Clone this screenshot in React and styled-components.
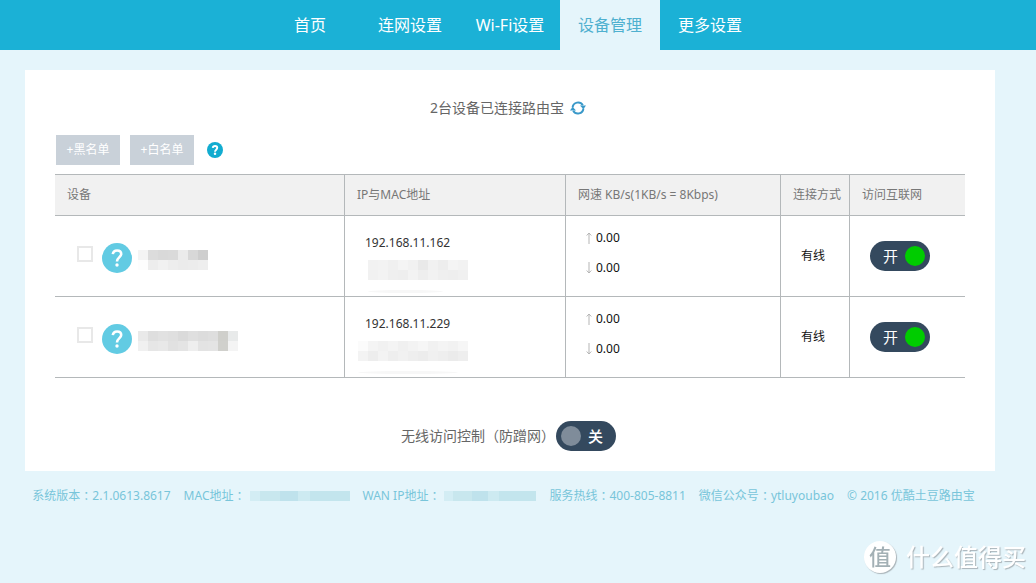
import React, { useState } from 'react';
import styled, { createGlobalStyle } from 'styled-components';

const GlobalStyle = createGlobalStyle`
  * {
    box-sizing: border-box;
  }

  body {
    margin: 0;
    background: #e5f5fb;
    color: #111;
    font-family: 'Noto Sans', 'Noto Sans CJK SC', sans-serif;
    font-size: 12px;
    line-height: 20px;
  }
`;

const Header = styled.header`
  background: #1bb1d6;
  padding-right: 16px;
`;

const Nav = styled.nav`
  display: flex;
  justify-content: center;
`;

const NavLink = styled.a`
  width: 100px;
  height: 50px;
  line-height: 50px;
  font-size: 16px;
  text-align: center;
  text-decoration: none;
  white-space: nowrap;
  color: ${(props) => (props.$active ? '#4fb0cf' : '#fff')};
  background: ${(props) => (props.$active ? '#e5f5fb' : 'transparent')};
`;

const Page = styled.div`
  padding: 20px 16px 0 0;
`;

const Card = styled.main`
  margin: 0 25px;
  padding: 28px 30px 20px;
  background: #fff;
`;

const Summary = styled.div`
  display: flex;
  justify-content: center;
  align-items: center;
  gap: 6px;
  padding-right: 4px;
  font-size: 14px;
  color: #666;
`;

const IconButton = styled.button`
  display: flex;
  padding: 0;
  border: none;
  background: none;
  cursor: pointer;
`;

const Toolbar = styled.div`
  display: flex;
  align-items: center;
  gap: 10px;
  margin: 17px 0 9px 1px;
`;

const ListButton = styled.button`
  width: 64px;
  height: 30px;
  padding: 0;
  border: none;
  background: #c9d1d9;
  color: #fff;
  font: inherit;
  cursor: pointer;
`;

const HelpButton = styled(IconButton)`
  margin-left: 3px;
`;

const Table = styled.table`
  width: 100%;
  table-layout: fixed;
  border-collapse: separate;
  border-spacing: 0;
`;

const Th = styled.th`
  width: ${(props) => props.$width || 'auto'};
  height: 42px;
  padding: 0 0 0 12px;
  border-top: 1px solid #b4b8ba;
  border-bottom: 1px solid #b4b8ba;
  background: #f1f1f1;
  color: #777;
  font-weight: normal;
  text-align: left;
  white-space: nowrap;

  & + & {
    border-left: 1px solid #b4b8ba;
  }
`;

const Td = styled.td`
  height: 81px;
  padding: ${(props) => props.$top || '0'} 0 0 20px;
  border-bottom: 1px solid #b4b8ba;
  vertical-align: ${(props) => (props.$top ? 'top' : 'middle')};

  & + & {
    border-left: 1px solid #b4b8ba;
  }
`;

const Device = styled.div`
  display: flex;
  align-items: flex-start;
  padding-left: 2px;
`;

const CheckBox = styled.input`
  appearance: none;
  width: 16px;
  height: 16px;
  margin: 3px 9px 0 0;
  border: 2px solid #e8e8e8;
  background: #fff;

  &:checked {
    background: #1bb1d6;
  }
`;

const DeviceName = styled.div`
  padding: 7px 0 0 6px;
`;

const IpAddress = styled.div`
  color: #333;
`;

const MacAddress = styled.div`
  margin-top: 7px;
  margin-left: ${(props) => props.$shift}px;
`;

const Smudge = styled.div`
  width: ${(props) => props.$width}px;
  height: 3px;
  margin-top: 10px;
  border-radius: 50%;
  background: #f7f7f7;
`;

const MosaicGrid = styled.div`
  display: grid;
  grid-template-columns: repeat(${(props) => props.$cols}, 10px);
  grid-auto-rows: 10px;
`;

const MosaicCell = styled.span`
  background: ${(props) => props.$color};
`;

const Speed = styled.div`
  display: flex;
  align-items: center;
  gap: 4px;
  height: 30px;
`;

const SwitchLabel = styled.label`
  position: relative;
  display: flex;
  flex-direction: ${(props) => (props.$on ? 'row' : 'row-reverse')};
  justify-content: space-between;
  align-items: center;
  width: 60px;
  height: 30px;
  padding: ${(props) => (props.$on ? '0 5px 0 13px' : '0 13px 0 5px')};
  border-radius: 15px;
  background: #34495e;
  color: #fff;
  font-size: 15px;
  font-weight: ${(props) => (props.$on ? 400 : 500)};
  cursor: pointer;
`;

const SwitchInput = styled.input`
  position: absolute;
  inset: 0;
  margin: 0;
  opacity: 0;
`;

const Knob = styled.span`
  width: 20px;
  height: 20px;
  border-radius: 50%;
  background: ${(props) => (props.$on ? '#00cc00' : '#7f8c9a')};
`;

const AccessControl = styled.div`
  display: flex;
  justify-content: center;
  align-items: center;
  gap: 1px;
  margin-top: 43px;
  padding-right: 3px;
  font-size: 14px;
  color: #666;
`;

const Footer = styled.footer`
  display: flex;
  justify-content: center;
  margin-top: 15px;
  color: #78c5da;
  white-space: nowrap;
`;

const FooterItem = styled.span`
  display: flex;
  align-items: center;
  margin-right: ${(props) => props.$gap || 13}px;
`;

// the TC face centres the full-width colon in its cell
const Colon = styled.span`
  font-family: 'Noto Sans CJK TC', sans-serif;
`;

const FooterMosaic = styled.div`
  width: ${(props) => props.$width}px;
  height: 10px;
  margin-left: 4px;
  background: linear-gradient(
    90deg,
    #d3edf4 0 10%,
    #c8e7ee 10% 30%,
    #bfe2ec 30% 48%,
    #cdeaf1 48% 60%,
    #c3e5ed 60%
  );
`;

const Watermark = styled.div`
  position: fixed;
  right: 10px;
  bottom: 10px;
  display: flex;
  align-items: center;
  gap: 10px;
  color: #fff;
  font-size: 24px;
  font-weight: 500;
  line-height: 32px;
  text-shadow: 1px 1px 1px #a9b3b8;
`;

const WatermarkBadge = styled.span`
  width: 32px;
  height: 32px;
  border-radius: 50%;
  background: #fff;
  box-shadow: 1px 1px 1px #a9b3b8;
  color: #a3b0b5;
  font-size: 22px;
  line-height: 30px;
  text-align: center;
  text-shadow: none;
`;

const menu = ['首页', '连网设置', 'Wi-Fi设置', '设备管理', '更多设置'];

const devices = [
  {
    id: 1,
    ip: '192.168.11.162',
    name: [
      ['#f4f4f4', '#dcdcdc', '#d9d9d9', '#dadada', '#ebebeb', '#d8d8d8', '#cecece'],
      ['#fdfdfd', '#ededed', '#f1f1f1', '#ededed', '#ebebeb', '#ececec', '#eeeeee'],
    ],
    mac: [
      ['#f2f2f2', '#f3f3f3', '#f0f0f0', '#f4f4f4', '#f1f1f1', '#e9e9e9', '#f1f1f1', '#ededed', '#f4f4f4', '#f2f2f2'],
      ['#f1f1f1', '#f3f3f3', '#efefef', '#eeeeee', '#f3f3f3', '#eeeeee', '#f2f2f2', '#efefef', '#eeeeee', '#f0f0f0'],
    ],
    shift: 3,
    smudge: 75,
  },
  {
    id: 2,
    ip: '192.168.11.229',
    name: [
      ['#e9e9e9', '#dedede', '#e1e1e1', '#dfdfdf', '#dadada', '#dfdfdf', '#dcdcdc', '#dedede', '#cfcfcb', '#e8eaea'],
      ['#f0f0f0', '#e6e6e6', '#e8e8e8', '#e1e1e1', '#e4e4e4', '#eeeeee', '#e3e3e3', '#e4e4e4', '#d0d0cc', '#f4f4f4'],
    ],
    mac: [
      ['#fbfbfb', '#f4f4f4', '#f1f1f1', '#f4f4f4', '#f0f0f0', '#f3f3f3', '#f6f6f6', '#f1f1f1', '#f4f4f4', '#f2f2f2', '#f6f6f6'],
      ['#f3f3f3', '#ededed', '#f3f3f3', '#eeeeee', '#f1f1f1', '#eeeeee', '#ececec', '#f0f0f0', '#eeeeee', '#ebebeb', '#eeeeee'],
    ],
    shift: -7,
    smudge: 100,
  },
];

function Mosaic({ rows }) {
  return (
    <MosaicGrid $cols={rows[0].length}>
      {rows.flat().map((color, i) => (
        <MosaicCell key={i} $color={color} />
      ))}
    </MosaicGrid>
  );
}

function QuestionIcon({ size, color, stroke }) {
  return (
    <svg width={size} height={size} viewBox="0 0 30 30" fill="none">
      <circle cx="15" cy="15" r="15" fill={color} />
      <path
        d="M10.8 11.2c.3-2.4 2-3.7 4.3-3.7 2.4 0 4.1 1.4 4.1 3.5 0 3.3-4.2 3.6-4.2 7.4"
        stroke="#fff"
        strokeWidth={stroke}
      />
      <circle cx="15" cy="22" r={stroke * 0.65} fill="#fff" />
    </svg>
  );
}

function RefreshIcon() {
  return (
    <svg width="16" height="14" viewBox="0 0 16 14" fill="none">
      <path d="M2.6 6.4A5.5 5.5 0 0 1 12.8 4.2" stroke="#3a99c9" strokeWidth="2" />
      <path d="M13.4 7.6A5.5 5.5 0 0 1 3.2 9.8" stroke="#3a99c9" strokeWidth="2" />
      <path d="M10 4.6H16L13.4 8.2z" fill="#3a99c9" />
      <path d="M6 9.4H0L2.6 5.8z" fill="#3a99c9" />
    </svg>
  );
}

function Arrow({ down }) {
  return (
    <svg width="6" height="12" viewBox="0 0 6 12" fill="none" stroke="#b5b5b5">
      <path d={down ? 'M3 0v11M.7 8.5 3 11l2.3-2.5' : 'M3 12V1M.7 3.5 3 1l2.3 2.5'} />
    </svg>
  );
}

function Switch({ label, defaultOn }) {
  const [on, setOn] = useState(defaultOn);

  return (
    <SwitchLabel $on={on}>
      <SwitchInput
        type="checkbox"
        role="switch"
        aria-label={label}
        checked={on}
        onChange={() => setOn(!on)}
      />
      <span>{on ? '开' : '关'}</span>
      <Knob $on={on} />
    </SwitchLabel>
  );
}

function DeviceRow({ device }) {
  return (
    <tr>
      <Td $top="27px">
        <Device>
          <CheckBox type="checkbox" aria-label={device.ip} />
          <QuestionIcon size={30} color="#62cbe3" stroke={2.6} />
          <DeviceName>
            <Mosaic rows={device.name} />
          </DeviceName>
        </Device>
      </Td>
      <Td $top="17px">
        <IpAddress>{device.ip}</IpAddress>
        <MacAddress $shift={device.shift}>
          <Mosaic rows={device.mac} />
          <Smudge $width={device.smudge} />
        </MacAddress>
      </Td>
      <Td $top="7px">
        <Speed>
          <Arrow />
          0.00
        </Speed>
        <Speed>
          <Arrow down />
          0.00
        </Speed>
      </Td>
      <Td>有线</Td>
      <Td>
        <Switch label="访问互联网" defaultOn />
      </Td>
    </tr>
  );
}

function App() {
  return (
    <>
      <GlobalStyle />
      <Header>
        <Nav>
          {menu.map((item) => (
            <NavLink key={item} href="#" $active={item === '设备管理'}>
              {item}
            </NavLink>
          ))}
        </Nav>
      </Header>
      <Page>
        <Card>
          <Summary>
            <span>2台设备已连接路由宝</span>
            <IconButton aria-label="刷新">
              <RefreshIcon />
            </IconButton>
          </Summary>
          <Toolbar>
            <ListButton>+黑名单</ListButton>
            <ListButton>+白名单</ListButton>
            <HelpButton aria-label="帮助">
              <QuestionIcon size={16} color="#12acd0" stroke={3.6} />
            </HelpButton>
          </Toolbar>
          <Table>
            <thead>
              <tr>
                <Th>设备</Th>
                <Th $width="221px">IP与MAC地址</Th>
                <Th $width="215px">网速 KB/s(1KB/s = 8Kbps)</Th>
                <Th $width="69px">连接方式</Th>
                <Th $width="116px">访问互联网</Th>
              </tr>
            </thead>
            <tbody>
              {devices.map((device) => (
                <DeviceRow key={device.id} device={device} />
              ))}
            </tbody>
          </Table>
          <AccessControl>
            <span>无线访问控制（防蹭网）</span>
            <Switch label="无线访问控制（防蹭网）" defaultOn={false} />
          </AccessControl>
        </Card>
        <Footer>
          <FooterItem>
            系统版本<Colon>：</Colon>2.1.0613.8617
          </FooterItem>
          <FooterItem>
            MAC地址<Colon>：</Colon>
            <FooterMosaic $width={100} />
          </FooterItem>
          <FooterItem>
            WAN IP地址<Colon>：</Colon>
            <FooterMosaic $width={92} />
          </FooterItem>
          <FooterItem>
            服务热线<Colon>：</Colon>400-805-8811
          </FooterItem>
          <FooterItem>
            微信公众号<Colon>：</Colon>ytluyoubao
          </FooterItem>
          <FooterItem>© 2016 优酷土豆路由宝</FooterItem>
        </Footer>
      </Page>
      <Watermark>
        <WatermarkBadge>值</WatermarkBadge>
        <span>什么值得买</span>
      </Watermark>
    </>
  );
}

export default App;
